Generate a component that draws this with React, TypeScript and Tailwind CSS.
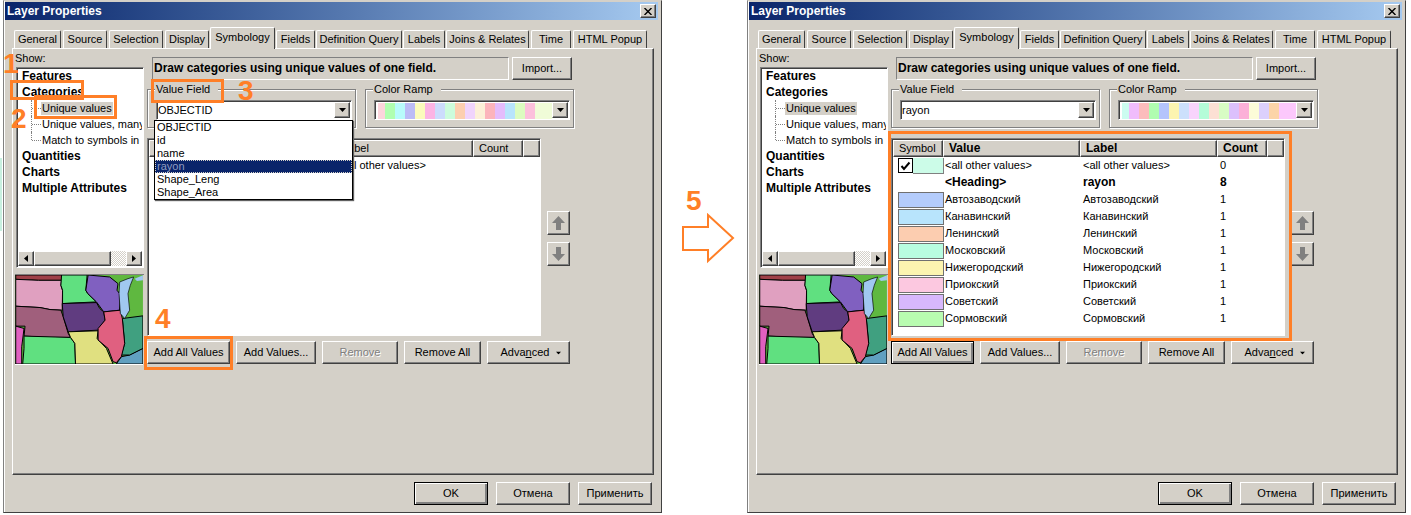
import React from "react";

const raised = "border border-t-white border-l-white border-r-[#404040] border-b-[#404040] shadow-[inset_-1px_-1px_0_#808080]";
const sunken = "border border-t-[#808080] border-l-[#808080] border-r-white border-b-white shadow-[inset_1px_1px_0_#404040]";
const etched = "border border-[#808080] shadow-[1px_1px_0_#fff,inset_1px_1px_0_#fff]";
const strong = "font-bold text-[12px]";
const digit = "absolute z-20 text-[28px] font-bold leading-[28px] text-[#ff7f27]";

const tabs = [
  { t: "General", c: "w-[47px] mr-[2px]" },
  { t: "Source", c: "w-[44px] mr-[2px]" },
  { t: "Selection", c: "w-[54px] mr-[2px]" },
  { t: "Display", c: "w-[44px] mr-px" },
  { t: "Symbology", c: "w-[65px] mr-px", active: true },
  { t: "Fields", c: "w-[39px] mr-px" },
  { t: "Definition Query", c: "w-[86px] mr-px" },
  { t: "Labels", c: "w-[42px] mr-px" },
  { t: "Joins & Relates", c: "w-[83px] mr-[2px]" },
  { t: "Time", c: "w-[40px] mr-[2px]" },
  { t: "HTML Popup", c: "w-[74px]" },
];

const rampA = ["w-[7px] bg-[#fcd5dc]", "w-[10px] bg-[#b0ffb0]", "w-[10px] bg-[#b8fbfb]", "w-[10px] bg-[#bcbcf6]", "w-[10px] bg-[#fbfbbc]", "w-[10px] bg-[#fcb4e4]", "w-[10px] bg-[#ccdcfc]", "w-[10px] bg-[#ccfcdc]", "w-[10px] bg-[#fccfb0]", "w-[10px] bg-[#f0d4fc]", "w-[10px] bg-[#fcf0d8]", "w-[10px] bg-[#fcb4bc]", "w-[10px] bg-[#e4bcfc]", "w-[10px] bg-[#b8e4fc]", "w-[10px] bg-[#dcfcc0]", "w-[10px] bg-[#fcc0dc]", "w-[18px] bg-[#f0fcd8]"];
const rampB = ["w-[7px] bg-[#ccfcf0]", "w-[10px] bg-[#f0bcfc]", "w-[10px] bg-[#fcbcbc]", "w-[10px] bg-[#b0fcb0]", "w-[10px] bg-[#b4c4fc]", "w-[10px] bg-[#fcf4b0]", "w-[10px] bg-[#cce0fc]", "w-[10px] bg-[#f8d4fc]", "w-[10px] bg-[#b4fcd8]", "w-[10px] bg-[#fce0d4]", "w-[10px] bg-[#d8fcc4]", "w-[10px] bg-[#dcc0fc]", "w-[10px] bg-[#fcb0d8]", "w-[10px] bg-[#fcfcd8]", "w-[10px] bg-[#dcd0fc]", "w-[10px] bg-[#fcd4a8]", "w-[18px] bg-[#fcc8fc]"];

const rows = [
  { n: "Автозаводский", c: "bg-[#b4ccfc]" },
  { n: "Канавинский", c: "bg-[#b8e4fc]" },
  { n: "Ленинский", c: "bg-[#fccdb0]" },
  { n: "Московский", c: "bg-[#b8fce0]" },
  { n: "Нижегородский", c: "bg-[#fcf4b0]" },
  { n: "Приокский", c: "bg-[#fcc8e0]" },
  { n: "Советский", c: "bg-[#d8b8fc]" },
  { n: "Сормовский", c: "bg-[#b8fcb0]" },
];

function Btn({ className = "", children, def = false, disabled = false }: { className?: string; children: React.ReactNode; def?: boolean; disabled?: boolean }) {
  return (
    <div className={`flex items-center justify-center bg-[#d4d0c8] ${def ? "border border-black shadow-[inset_1px_1px_0_#fff,inset_-2px_-2px_0_#808080]" : raised} ${disabled ? "text-[#808080] [text-shadow:1px_1px_0_#fff]" : ""} ${className}`}>
      {children}
    </div>
  );
}

function Caret({ className = "" }: { className?: string }) {
  return (
    <svg width="7" height="4" viewBox="0 0 7 4" className={className}>
      <path d="M0 0H7L3.5 4Z" fill="#000" />
    </svg>
  );
}

function Combo({ children, className = "" }: { children: React.ReactNode; className?: string }) {
  return (
    <div className={`flex h-[20px] w-[196px] items-stretch bg-white ${sunken} ${className}`}>
      <div className="flex min-w-0 flex-1 items-center pl-px pt-px">{children}</div>
      <Btn className="my-px mr-px w-[16px]">
        <Caret />
      </Btn>
    </div>
  );
}

function Group({ label, className = "", children }: { label: string; className?: string; children: React.ReactNode }) {
  return (
    <div className={`relative h-[39px] w-[209px] pl-[8px] pt-[10px] ${etched} ${className}`}>
      <span className="absolute left-[7px] top-[-7px] bg-[#d4d0c8] px-px pr-2 leading-[13px]">{label}</span>
      {children}
    </div>
  );
}

function Map() {
  const s = { stroke: "#000", strokeWidth: 3, strokeLinejoin: "round" as const };
  return (
    <svg width="128" height="90" viewBox="45 44 385 268" className="block border-b border-white">
      <rect x="45" y="44" width="385" height="268" fill="#5fb840" />
      <polygon points="47,44 185,44 185,60 115,60 47,57" fill="#a04048" {...s} />
      <polygon points="47,57 115,60 185,60 183,75 188,90 187,150 150,148 120,142 47,138" fill="#e0a0c0" {...s} />
      <polygon points="47,138 120,142 150,148 183,150 190,170 205,220 212,232 150,232 72,228 75,198 47,198" fill="#a05f7c" {...s} />
      <polygon points="47,198 72,205 65,260 65,312 47,312" fill="#e060c0" {...s} />
      <polygon points="72,228 212,232 225,250 227,312 68,312 72,265" fill="#60e080" {...s} />
      <polygon points="185,44 262,44 258,90 264,100 290,125 188,130 188,90 183,75" fill="#60e080" {...s} />
      <polygon points="265,44 330,50 355,70 352,90 360,100 360,150 312,155 290,125 264,100 258,90" fill="#8060c0" {...s} />
      <polygon points="187,130 290,127 300,145 312,155 316,180 295,210 205,215 190,170" fill="#603c80" {...s} />
      <polygon points="205,215 295,212 292,235 320,265 340,312 227,312 225,250 212,232" fill="#e0e080" {...s} />
      <polygon points="365,290 390,285 430,265 430,312 350,312" fill="#60a0c0" {...s} />
      <polygon points="368,175 430,167 430,265 390,285 365,285 375,250" fill="#40a080" {...s} />
      <polygon points="312,155 362,150 368,175 375,250 365,290 350,308 340,305 325,265 295,240 295,205 316,180" fill="#e06080" {...s} />
      <polygon points="360,65 385,55 402,50 392,75 385,100 390,150 375,175 362,160 358,100" fill="#a0c8f0" stroke="#000" strokeWidth="2" />
      <polygon points="405,55 430,45 430,60 412,62" fill="#a0c8f0" />
    </svg>
  );
}

function Tree() {
  const child = (label: string, last: boolean, selected: boolean) => (
    <div className="relative flex h-4 items-center pl-[23px]">
      <span className={`absolute left-[13px] top-0 w-px border-l border-dotted border-[#808080] ${last ? "h-[8px]" : "h-4"}`} />
      <span className="absolute left-[14px] top-[8px] w-[9px] border-t border-dotted border-[#808080]" />
      <span className={`whitespace-nowrap px-px ${selected ? "bg-[#d4d0c8]" : ""}`}>{label}</span>
    </div>
  );
  const bold = (label: string) => <div className={`flex h-4 items-center whitespace-nowrap pl-[4px] ${strong}`}>{label}</div>;
  return (
    <div className={`ml-px flex h-[201px] w-[128px] flex-col overflow-hidden bg-white px-px pb-px ${sunken}`}>
      <div className="h-[183px] overflow-hidden">
        {bold("Features")}
        {bold("Categories")}
        {child("Unique values", false, true)}
        {child("Unique values, many fields", false, false)}
        {child("Match to symbols in a style", true, false)}
        {bold("Quantities")}
        {bold("Charts")}
        {bold("Multiple Attributes")}
      </div>
      <div className="flex h-[15px] shrink-0">
        <Btn className="w-[16px]">
          <svg width="4" height="7" viewBox="0 0 4 7"><path d="M4 0V7L0 3.5Z" fill="#000" /></svg>
        </Btn>
        <Btn className="w-[77px]"><span /></Btn>
        <div className="flex-1 bg-[repeating-conic-gradient(#d4d0c8_0_25%,#fff_0_50%)] bg-[length:2px_2px]" />
        <Btn className="w-[16px]">
          <svg width="4" height="7" viewBox="0 0 4 7"><path d="M0 0V7L4 3.5Z" fill="#000" /></svg>
        </Btn>
      </div>
    </div>
  );
}

function Cells({ a, b, c, swatch, bold = false }: { a: string; b: string; c: string; swatch: React.ReactNode; bold?: boolean }) {
  return (
    <div className={`flex h-[17px] items-center ${bold ? strong : ""}`}>
      <div className="flex h-full w-[51px] shrink-0 items-center pl-[5px]">{swatch}</div>
      <div className="w-[137px] shrink-0 whitespace-nowrap pl-[1px]">{a}</div>
      <div className="w-[137px] shrink-0 whitespace-nowrap pl-[2px]">{b}</div>
      <div className="pl-[2px]">{c}</div>
    </div>
  );
}

function ValueTable({ full }: { full: boolean }) {
  const head = (label: string, w: string, b: boolean) => (
    <Btn className={`h-[17px] shrink-0 !justify-start pl-[5px] ${w} ${b ? strong : ""}`}>{label}</Btn>
  );
  return (
    <div className={`h-[198px] w-[394px] overflow-hidden bg-white pl-px pt-px ${sunken}`}>
      <div className="flex">
        {head("Symbol", "w-[50px]", false)}
        {head("Value", "w-[137px]", full)}
        {head("Label", "w-[137px]", full)}
        {head("Count", "w-[50px]", full)}
        <Btn className="h-[17px] flex-1"><span /></Btn>
      </div>
      <Cells
        a="<all other values>"
        b="<all other values>"
        c={full ? "0" : ""}
        swatch={
          <>
            <span className="flex h-[15px] w-[15px] shrink-0 items-center justify-center border border-black bg-white">
              <svg width="11" height="10" viewBox="0 0 11 10"><path d="M1.5 5L4 8L9.5 1.5" fill="none" stroke="#000" strokeWidth="2" /></svg>
            </span>
            <span className="h-[16px] w-[31px] shrink-0 border-r border-b border-[#808080] bg-[#ccfce8]" />
          </>
        }
      />
      {full && <Cells bold a="<Heading>" b="rayon" c="8" swatch={null} />}
      {full &&
        rows.map((r) => (
          <Cells key={r.n} a={r.n} b={r.n} c="1" swatch={<span className={`h-[16px] w-[46px] border border-[#707070] ${r.c}`} />} />
        ))}
    </div>
  );
}

function MoveBtn({ up, className = "" }: { up: boolean; className?: string }) {
  return (
    <Btn className={`h-[24px] w-[23px] ${className}`}>
      <svg width="13" height="14" viewBox="0 0 13 14">
        <path d={up ? "M6.5 0L13 7H9V14H4V7H0Z" : "M4 0H9V7H13L6.5 14L0 7H4Z"} fill="#808080" />
      </svg>
    </Btn>
  );
}

function Dropdown() {
  const items = ["OBJECTID", "id", "name", "rayon", "Shape_Leng", "Shape_Area"];
  return (
    <div className="absolute left-[6px] top-[30px] z-10 w-[199px] border border-black bg-white shadow-[1px_1px_1px_#606060]">
      {items.map((t) => (
        <div key={t} className={`h-[13px] pl-[2px] leading-[13px] ${t === "rayon" ? "bg-[#0a246a] text-[#8f9cc0] outline-1 -outline-offset-1 outline-dotted outline-[#d4d0c8]" : ""}`}>
          {t}
        </div>
      ))}
    </div>
  );
}

function Dialog({ full, className = "" }: { full: boolean; className?: string }) {
  return (
    <div className={`relative flex h-[513px] w-[659px] shrink-0 flex-col border border-t-[#d4d0c8] border-l-[#808080] border-r-[#404040] border-b-[#404040] bg-[#d4d0c8] pl-px pr-[3px] pt-px shadow-[inset_1px_0_0_#fff] ${className}`}>
      <div className="flex h-[18px] items-center justify-between bg-gradient-to-r from-[#0a246a] to-[#a6caf0] pl-[2px] pr-[2px]">
        <span className={`pt-px text-white ${strong}`}>Layer Properties</span>
        <Btn className="h-[14px] w-[16px]">
          <svg width="8" height="7" viewBox="0 0 8 7"><path d="M0.5 0L7.5 7M7.5 0L0.5 7" stroke="#000" strokeWidth="1.4" /></svg>
        </Btn>
      </div>

      <div className="mt-[8px] flex h-[20px] items-end pl-[9px]">
        {tabs.map((t) => (
          <div
            key={t.t}
            className={`z-[1] flex items-center justify-center whitespace-nowrap rounded-t-[2px] border border-b-0 border-t-white border-l-white border-r-[#404040] bg-[#d4d0c8] ${t.active ? "-mb-px h-[22px] pb-[2px]" : "h-[18px]"} ${t.c}`}
          >
            {t.t}
          </div>
        ))}
      </div>

      <div className="ml-[7px] flex h-[427px] w-[642px] border border-t-white border-l-white border-r-[#404040] border-b-[#404040] shadow-[inset_-1px_-1px_0_#808080]">
        <div className="ml-[2px] flex w-[129px] shrink-0 flex-col">
          <div className="flex h-[18px] items-center">Show:</div>
          <Tree />
          <div className="mt-[6px] border-t border-[#808080]">
            <Map />
          </div>
        </div>

        <div className="ml-[3px] flex flex-col">
          <div className="mt-[8px] flex">
            <div className={`ml-[5px] flex h-[23px] w-[357px] items-center border border-t-[#808080] border-l-[#808080] border-r-white border-b-white pl-px ${strong}`}>
              Draw categories using unique values of one field.
            </div>
            <Btn className="ml-[3px] h-[23px] w-[60px]">Import...</Btn>
          </div>

          <div className="relative z-10 mt-[9px] flex gap-[9px]">
            <Group label="Value Field">
              <Combo>{full ? "rayon" : "OBJECTID"}</Combo>
              {!full && <Dropdown />}
            </Group>
            <Group label="Color Ramp">
              <Combo>
                <div className="ml-[2px] flex h-[16px] overflow-hidden">
                  {(full ? rampB : rampA).map((c, i) => (
                    <span key={i} className={`h-full shrink-0 ${c}`} />
                  ))}
                </div>
              </Combo>
            </Group>
          </div>

          <div className="mt-[10px] flex">
            <ValueTable full={full} />
            <div className="ml-[6px] mt-[73px] flex flex-col gap-[7px]">
              <MoveBtn up />
              <MoveBtn up={false} />
            </div>
          </div>

          <div className="mt-[5px] flex h-[23px] gap-[6px]">
            <Btn def={full} className="w-[83px]">Add All Values</Btn>
            <Btn className="w-[80px]">Add Values...</Btn>
            <Btn disabled className="w-[76px]">Remove</Btn>
            <Btn className="w-[77px]">Remove All</Btn>
            <Btn className="w-[83px] gap-[6px] pl-[6px]">
              <span>
                Adva<span className="underline">n</span>ced
              </span>
              <Caret className="scale-75" />
            </Btn>
          </div>
        </div>
      </div>

      <div className="ml-[409px] mt-[7px] flex h-[23px] gap-[8px]">
        <Btn def className="w-[74px]">OK</Btn>
        <Btn className="w-[74px]">Отмена</Btn>
        <Btn className="w-[74px]">Применить</Btn>
      </div>

      {!full && (
        <>
          <span className="absolute left-[6px] top-[79px] z-20 h-[20px] w-[74px] border-[3px] border-[#ff7f27]" />
          <span className="absolute left-[30px] top-[94px] z-20 h-[24px] w-[83px] border-[3px] border-[#ff7f27]" />
          <span className="absolute left-[147px] top-[78px] z-20 h-[24px] w-[73px] border-[3px] border-[#ff7f27]" />
          <span className="absolute left-[140px] top-[335px] z-20 h-[34px] w-[89px] border-[3px] border-[#ff7f27]" />
          <span className={`left-[-1px] top-[49px] ${digit}`}>1</span>
          <span className={`left-[7px] top-[104px] ${digit}`}>2</span>
          <span className={`left-[234px] top-[76px] ${digit}`}>3</span>
          <span className={`left-[151px] top-[304px] ${digit}`}>4</span>
        </>
      )}
      {full && <span className="absolute left-[140px] top-[130px] z-20 h-[210px] w-[404px] border-[3px] border-[#ff7f27]" />}
    </div>
  );
}

export default function App() {
  return (
    <div className="relative flex h-[515px] w-[1411px] overflow-hidden bg-white pl-[3px] font-['Liberation_Sans',sans-serif] text-[11px] leading-[13px] text-black">
      <span className="absolute left-0 top-[158px] h-[73px] w-[2px] bg-[#c8f0e0]" />
      <Dialog full={false} />
      <div className="relative w-[85px] shrink-0">
        <span className="absolute left-[24px] top-[187px] text-[28px] font-bold leading-[28px] text-[#ff7f27]">5</span>
        <svg width="60" height="52" viewBox="0 0 60 52" className="absolute left-[19px] top-[213px]">
          <path d="M2 14H27V2L52 25L27 48V37H2Z" fill="none" stroke="#ff7f27" strokeWidth="2" />
        </svg>
      </div>
      <Dialog full />
    </div>
  );
}
